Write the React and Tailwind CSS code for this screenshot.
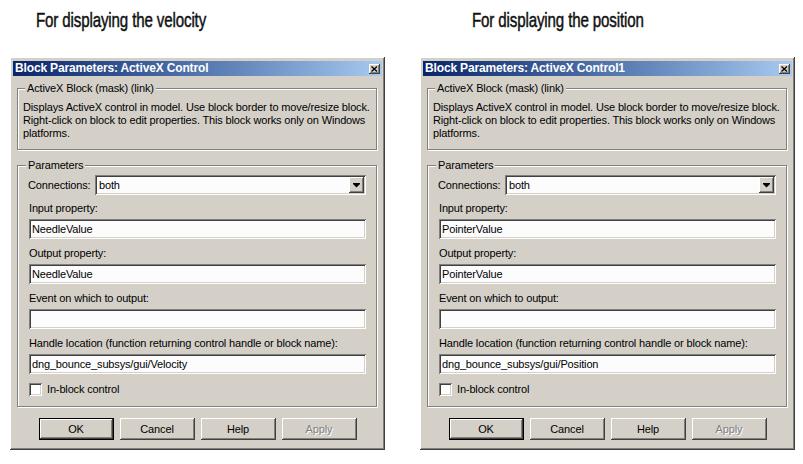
const raised =
  "shadow-[inset_-1px_-1px_0_#404040,inset_1px_1px_0_#ffffff,inset_-2px_-2px_0_#808080,inset_2px_2px_0_#d4d0c8]";
const sunken =
  "shadow-[inset_1px_1px_0_#808080,inset_-1px_-1px_0_#ffffff,inset_2px_2px_0_#404040,inset_-2px_-2px_0_#d4d0c8]";

function Field({ label, value, mt }) {
  return (
    <>
      <div className={`${mt} h-[14px] leading-[14px]`}>{label}</div>
      <div className={`mt-[4px] h-[20px] bg-[#fcfcfc] ${sunken} flex items-center px-[3px]`}>
        {value}
      </div>
    </>
  );
}

function Button({ children, isDefault, disabled }) {
  return (
    <div
      className={`w-[75px] h-[22px] flex items-center justify-center ${
        isDefault ? "border border-black" : ""
      }`}
    >
      <div className={`w-full h-full flex items-center justify-center ${raised}`}>
        <span
          className={
            disabled ? "text-[#808080] [text-shadow:1px_1px_0_#ffffff]" : "text-black"
          }
        >
          {children}
        </span>
      </div>
    </div>
  );
}

function Heading({ children, pad }) {
  return (
    <div className={`h-[57px] pt-[9px] ${pad}`}>
      <div className="origin-left scale-x-[0.72] whitespace-nowrap text-[21px] leading-[22px] tracking-[-0.2px] text-[#111] [-webkit-text-stroke:0.5px_#111]">
        {children}
      </div>
    </div>
  );
}

function Dialog({ title, prop, handle }) {
  return (
    <div
      className={`w-[375px] h-[393px] bg-[#d4d0c8] px-[3px] pt-[4px] flex flex-col ${raised}`}
    >
      {/* Title bar */}
      <div className="h-[15px] flex items-center justify-between bg-gradient-to-r from-[#0a246a] to-[#a6caf0] pl-[2px] pr-[2px]">
        <span className="text-white font-bold text-[12px] tracking-[-0.15px] leading-[15px]">
          {title}
        </span>
        <div className={`w-[11px] h-[10px] bg-[#d4d0c8] ${raised} flex items-center justify-center`}>
          <svg width="7" height="6" viewBox="0 0 7 6">
            <path d="M0.5 0.5 L6 5.5 M6 0.5 L0.5 5.5" stroke="#000" strokeWidth="1.3" />
          </svg>
        </div>
      </div>

      {/* Description group */}
      <div className="relative mt-[12px] ml-[4px] w-[360px] h-[62px] border border-[#808080] shadow-[inset_1px_1px_0_#ffffff,1px_1px_0_#ffffff] pt-[12px] pl-[5px] leading-[13px]">
        <span className="absolute left-[7px] top-[-7px] px-[2px] bg-[#d4d0c8] leading-[13px]">
          ActiveX Block (mask) (link)
        </span>
        <div>Displays ActiveX control in model. Use block border to move/resize block.</div>
        <div>Right-click on block to edit properties. This block works only on Windows</div>
        <div>platforms.</div>
      </div>

      {/* Parameters group */}
      <div className="relative mt-[15px] ml-[4px] w-[360px] h-[242px] border border-[#808080] shadow-[inset_1px_1px_0_#ffffff,1px_1px_0_#ffffff] pt-[9px] pl-[11px] pr-[10px] flex flex-col">
        <span className="absolute left-[8px] top-[-7px] px-[2px] bg-[#d4d0c8] leading-[13px]">
          Parameters
        </span>

        <div className="flex items-center h-[20px]">
          <div className="w-[67px] -ml-[1px]">Connections:</div>
          <div className={`flex-1 h-[20px] bg-[#fcfcfc] ${sunken} flex items-center justify-between pl-[4px] pr-[2px]`}>
            <span>both</span>
            <div className={`w-[15px] h-[16px] bg-[#d4d0c8] ${raised} flex items-center justify-center`}>
              <svg width="7" height="5" viewBox="0 0 7 5">
                <path d="M0 0 H7 V1 L3.5 4.5 L0 1 Z" fill="#000" />
              </svg>
            </div>
          </div>
        </div>

        <Field label="Input property:" value={prop} mt="mt-[6px]" />
        <Field label="Output property:" value={prop} mt="mt-[7px]" />
        <Field label="Event on which to output:" value="" mt="mt-[7px]" />
        <Field
          label="Handle location (function returning control handle or block name):"
          value={handle}
          mt="mt-[7px]"
        />

        <div className="mt-[9px] flex items-center h-[13px]">
          <div className={`w-[13px] h-[13px] bg-white ${sunken}`} />
          <span className="ml-[5px] leading-[13px]">In-block control</span>
        </div>
      </div>

      {/* Buttons */}
      <div className="mt-[11px] flex justify-center gap-[6px]">
        <Button isDefault>OK</Button>
        <Button>Cancel</Button>
        <Button>Help</Button>
        <Button disabled>Apply</Button>
      </div>
    </div>
  );
}

export default function App() {
  return (
    <div className="w-[803px] h-[464px] bg-white flex pl-[10px] gap-[35px] font-['Liberation_Sans',Arial,sans-serif] text-[11px] tracking-[-0.15px] text-black">
      <div className="flex flex-col">
        <Heading pad="pl-[26px]">For displaying the velocity</Heading>
        <Dialog
          title="Block Parameters: ActiveX Control"
          prop="NeedleValue"
          handle="dng_bounce_subsys/gui/Velocity"
        />
      </div>
      <div className="flex flex-col">
        <Heading pad="pl-[52px]">For displaying the position</Heading>
        <Dialog
          title="Block Parameters: ActiveX Control1"
          prop="PointerValue"
          handle="dng_bounce_subsys/gui/Position"
        />
      </div>
    </div>
  );
}
